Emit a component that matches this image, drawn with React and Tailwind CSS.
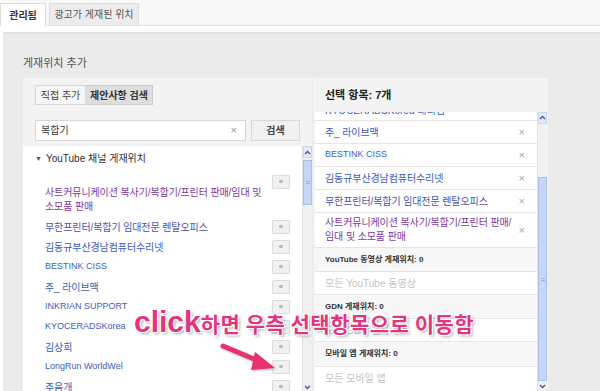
import React from "react";

const KR = "font-['Liberation_Sans','Noto_Sans_CJK_KR',sans-serif]";

function Scrollbar({ thumbTop, thumbBottom, height }) {
  return (
    <div className="w-[10px] shrink-0 bg-[#f1f1f1] border-l border-[#e2e2e2] flex flex-col" style={{ height }}>
      <div className="h-[12px] flex items-center justify-center bg-[#e4ebf8] border border-[#c9d6ef]">
        <svg width="7" height="5" viewBox="0 0 7 5"><path d="M1 4 L3.5 1.5 L6 4" stroke="#3d5a9a" strokeWidth="1.4" fill="none" /></svg>
      </div>
      <div style={{ height: thumbTop }} />
      <div className="bg-[#c5d6f6] border border-[#a9c0ec] flex items-center justify-center" style={{ height: thumbBottom - thumbTop }}>
        <div className="w-[4px] h-[3px] border-t border-b border-[#9cb3e0]" />
      </div>
      <div className="flex-1" />
      <div className="h-[10px] flex items-center justify-center">
        <svg width="7" height="5" viewBox="0 0 7 5"><path d="M1 1 L3.5 3.5 L6 1" stroke="#3d5a9a" strokeWidth="1.4" fill="none" /></svg>
      </div>
    </div>
  );
}

function AddBtn({ sym = "«" }) {
  return (
    <div className="w-[18px] h-[14px] bg-[#f1f1f1] border border-[#dcdcdc] rounded-[1px] flex items-center justify-center text-[8px] text-[#777] leading-none">
      {sym}
    </div>
  );
}

const leftRows = [
  { t: "무한프린터/복합기 임대전문 렌탈오피스", c: "#4a4fb0" },
  { t: "김동규부산경남컴퓨터수리넷", c: "#3d5cc0" },
  { t: "BESTINK CISS", c: "#3d5cc0", small: true },
  { t: "주_ 라이브맥", c: "#3d5cc0" },
  { t: "INKRIAN SUPPORT", c: "#3d5cc0", small: true },
  { t: "KYOCERADSKorea", c: "#3d5cc0", small: true },
  { t: "김상희", c: "#3d5cc0" },
  { t: "LongRun WorldWel", c: "#3d5cc0", small: true, sym: "»" },
  { t: "주음개", c: "#3d5cc0" },
];

const rightRows = [
  { t: "주_ 라이브맥", c: "#3d5cc0" },
  { t: "BESTINK CISS", c: "#3d5cc0", small: true },
  { t: "김동규부산경남컴퓨터수리넷", c: "#3d5cc0" },
  { t: "무한프린터/복합기 임대전문 렌탈오피스", c: "#4a4fb0" },
];

export default function App() {
  return (
    <div className={`relative w-[600px] h-[391px] overflow-hidden bg-white ${KR}`}>
      {/* tabs */}
      <div className="h-[26px] bg-[#f8f8f8] border-b border-[#e3e3e3] flex items-end">
        <div className="h-[23px] w-[46px] bg-white border border-b-0 border-[#dcdcdc] flex items-center justify-center text-[10px] font-bold text-[#333] -mb-px">
          관리됨
        </div>
        <div className="ml-[3px] h-[22px] w-[90px] bg-[#ececec] border border-b-0 border-[#dcdcdc] flex items-center justify-center text-[10px] text-[#555]">
          광고가 게재된 위치
        </div>
      </div>
      <div className="h-[6px]" />
      {/* main */}
      <div className="ml-[3px] h-[359px] bg-[#ebebeb] pl-[20px] shadow-[inset_0_1px_2px_rgba(0,0,0,0.06)]">
        <div className="pt-[24px] h-[38px] text-[11px] leading-[14px] text-[#555]">게재위치 추가</div>
        <div className="mt-[8px] flex gap-[1px]">
          {/* left panel */}
          <div className="w-[289px] h-[313px] bg-[#f3f3f3] flex flex-col">
            <div className="pt-[7px] pl-[12px] flex">
              <div className="h-[20px] w-[51px] bg-[#f6f6f6] border border-[#d8d8d8] flex items-center justify-center text-[10px] text-[#444]">직접 추가</div>
              <div className="h-[20px] w-[67px] bg-[#dedede] border border-l-0 border-[#cfcfcf] flex items-center justify-center text-[10px] font-bold text-[#333]">제안사항 검색</div>
            </div>
            <div className="mt-[15px] pl-[12px] flex items-center">
              <div className="h-[21px] w-[211px] bg-white border border-[#d6d6d6] flex items-center justify-between px-[5px]">
                <span className="text-[10px] text-[#333]">복합기</span>
                <span className="text-[11px] text-[#999] mr-[3px]">×</span>
              </div>
              <div className="ml-[5px] h-[21px] w-[49px] bg-[#f1f1f1] border border-[#d8d8d8] flex items-center justify-center text-[10px] font-bold text-[#444]">검색</div>
            </div>
            <div className="mt-[5px] flex flex-1 min-h-0">
              <div className="w-[279px] bg-white flex flex-col overflow-hidden">
                <div className="pt-[5px] h-[21px] pl-[12px] flex items-center text-[10px] text-[#333] leading-[16px]">
                  <span className="text-[7px] mr-[4px] text-[#555]">▼</span>
                  <span>YouTube 채널 게재위치</span>
                </div>
                <div className="mt-[8px] h-[16px] flex items-center justify-end pr-[12px]">
                  <AddBtn />
                </div>
                <div className="-mt-[3px] pl-[22px] pr-[30px] text-[10px] leading-[14px] tracking-[-0.1px] text-[#7a3a9c]">
                  사트커뮤니케이션 복사기/복합기/프린터 판매/임대 및<br />소모품 판매
                </div>
                <div className="mt-[3px] flex flex-col">
                  {leftRows.map((r, i) => (
                    <div key={i} className="h-[20px] shrink-0 flex items-center justify-between pl-[22px] pr-[12px]">
                      <span className={`${r.small ? "text-[9px]" : "text-[10px] tracking-[-0.1px]"}`} style={{ color: r.c }}>{r.t}</span>
                      <AddBtn sym={r.sym} />
                    </div>
                  ))}
                </div>
              </div>
              <Scrollbar height={246} thumbTop={2} thumbBottom={47} />
            </div>
          </div>
          {/* right panel */}
          <div className="w-[235px] h-[313px] bg-[#f3f3f3] flex flex-col">
            <div className="h-[34px] pl-[12px] flex items-center text-[11px] font-bold text-[#222]">선택 항목: 7개</div>
            <div className="ml-[2px] flex flex-1 min-h-0">
              <div className="w-[222px] bg-white flex flex-col overflow-hidden">
                <div className="h-[9px] overflow-hidden border-b border-[#e6e6e6] shrink-0">
                  <div className="-mt-[12px] h-[20px] pl-[10px] flex items-center text-[10px] text-[#3d5cc0]">KYOCERADSKorea 대리점</div>
                </div>
                {rightRows.map((r, i) => (
                  <div key={i} className="h-[23px] shrink-0 border-b border-[#e6e6e6] flex items-center justify-between pl-[10px] pr-[12px]">
                    <span className={`${r.small ? "text-[9px]" : "text-[10px] tracking-[-0.1px]"}`} style={{ color: r.c }}>{r.t}</span>
                    <span className="text-[11px] text-[#aaa]">×</span>
                  </div>
                ))}
                <div className="h-[35px] shrink-0 border-b border-[#e6e6e6] flex items-center justify-between pl-[10px] pr-[12px]">
                  <span className="text-[10px] leading-[14px] tracking-[-0.1px] text-[#7a3a9c]">사트커뮤니케이션 복사기/복합기/프린터 판매/<br />임대 및 소모품 판매</span>
                  <span className="text-[11px] text-[#aaa]">×</span>
                </div>
                <div className="h-[24px] shrink-0 bg-[#f7f7f7] border-b border-[#e6e6e6] pl-[10px] flex items-center text-[8px] font-bold text-[#333]">YouTube 동영상 게재위치: 0</div>
                <div className="h-[23px] shrink-0 border-b border-[#e6e6e6] pl-[10px] flex items-center text-[10px] text-[#c4c4c4]">모든 YouTube 동영상</div>
                <div className="h-[24px] shrink-0 bg-[#f7f7f7] border-b border-[#e6e6e6] pl-[10px] flex items-center text-[8px] font-bold text-[#333]">GDN 게재위치: 0</div>
                <div className="h-[23px] shrink-0 border-b border-[#e6e6e6] pl-[10px] flex items-center text-[10px] text-[#c4c4c4]">모든 GDN 웹사이트</div>
                <div className="h-[25px] shrink-0 bg-[#f7f7f7] border-b border-[#e6e6e6] pl-[10px] flex items-center text-[8px] font-bold text-[#333]">모바일 앱 게재위치: 0</div>
                <div className="h-[23px] shrink-0 pl-[10px] flex items-center text-[10px] text-[#c4c4c4]">모든 모바일 앱</div>
              </div>
              <Scrollbar height={279} thumbTop={54} thumbBottom={260} />
            </div>
          </div>
        </div>
      </div>

      {/* annotation */}
      <div className="absolute left-[134px] top-[305px] flex items-baseline whitespace-nowrap text-[#e3357f] font-bold [text-shadow:0_0_1px_#fff,0_0_2px_#fff,1px_1px_0_#fff,-1px_-1px_0_#fff,1px_-1px_0_#fff,-1px_1px_0_#fff,2px_2px_3px_rgba(0,0,0,0.35)]">
        <span className="font-['Liberation_Sans',sans-serif] text-[30px] leading-[34px]">click</span>
        <span className="font-['Noto_Sans_CJK_KR',sans-serif] text-[21px] leading-[34px] tracking-[0.5px]">하면 우측 선택항목으로 이동함</span>
      </div>
      <svg className="absolute left-[215px] top-[338px]" width="70" height="40" viewBox="0 0 70 40">
        <defs>
          <filter id="sh" x="-20%" y="-20%" width="140%" height="140%">
            <feDropShadow dx="1" dy="1" stdDeviation="1" floodColor="#000" floodOpacity="0.3" />
          </filter>
        </defs>
        <g filter="url(#sh)">
          <path d="M8 8 L46 24" stroke="#e8306f" strokeWidth="5" strokeLinecap="round" />
          <path d="M40 14 L60 30 L36 32 Z" fill="#e8306f" />
        </g>
      </svg>
    </div>
  );
}
